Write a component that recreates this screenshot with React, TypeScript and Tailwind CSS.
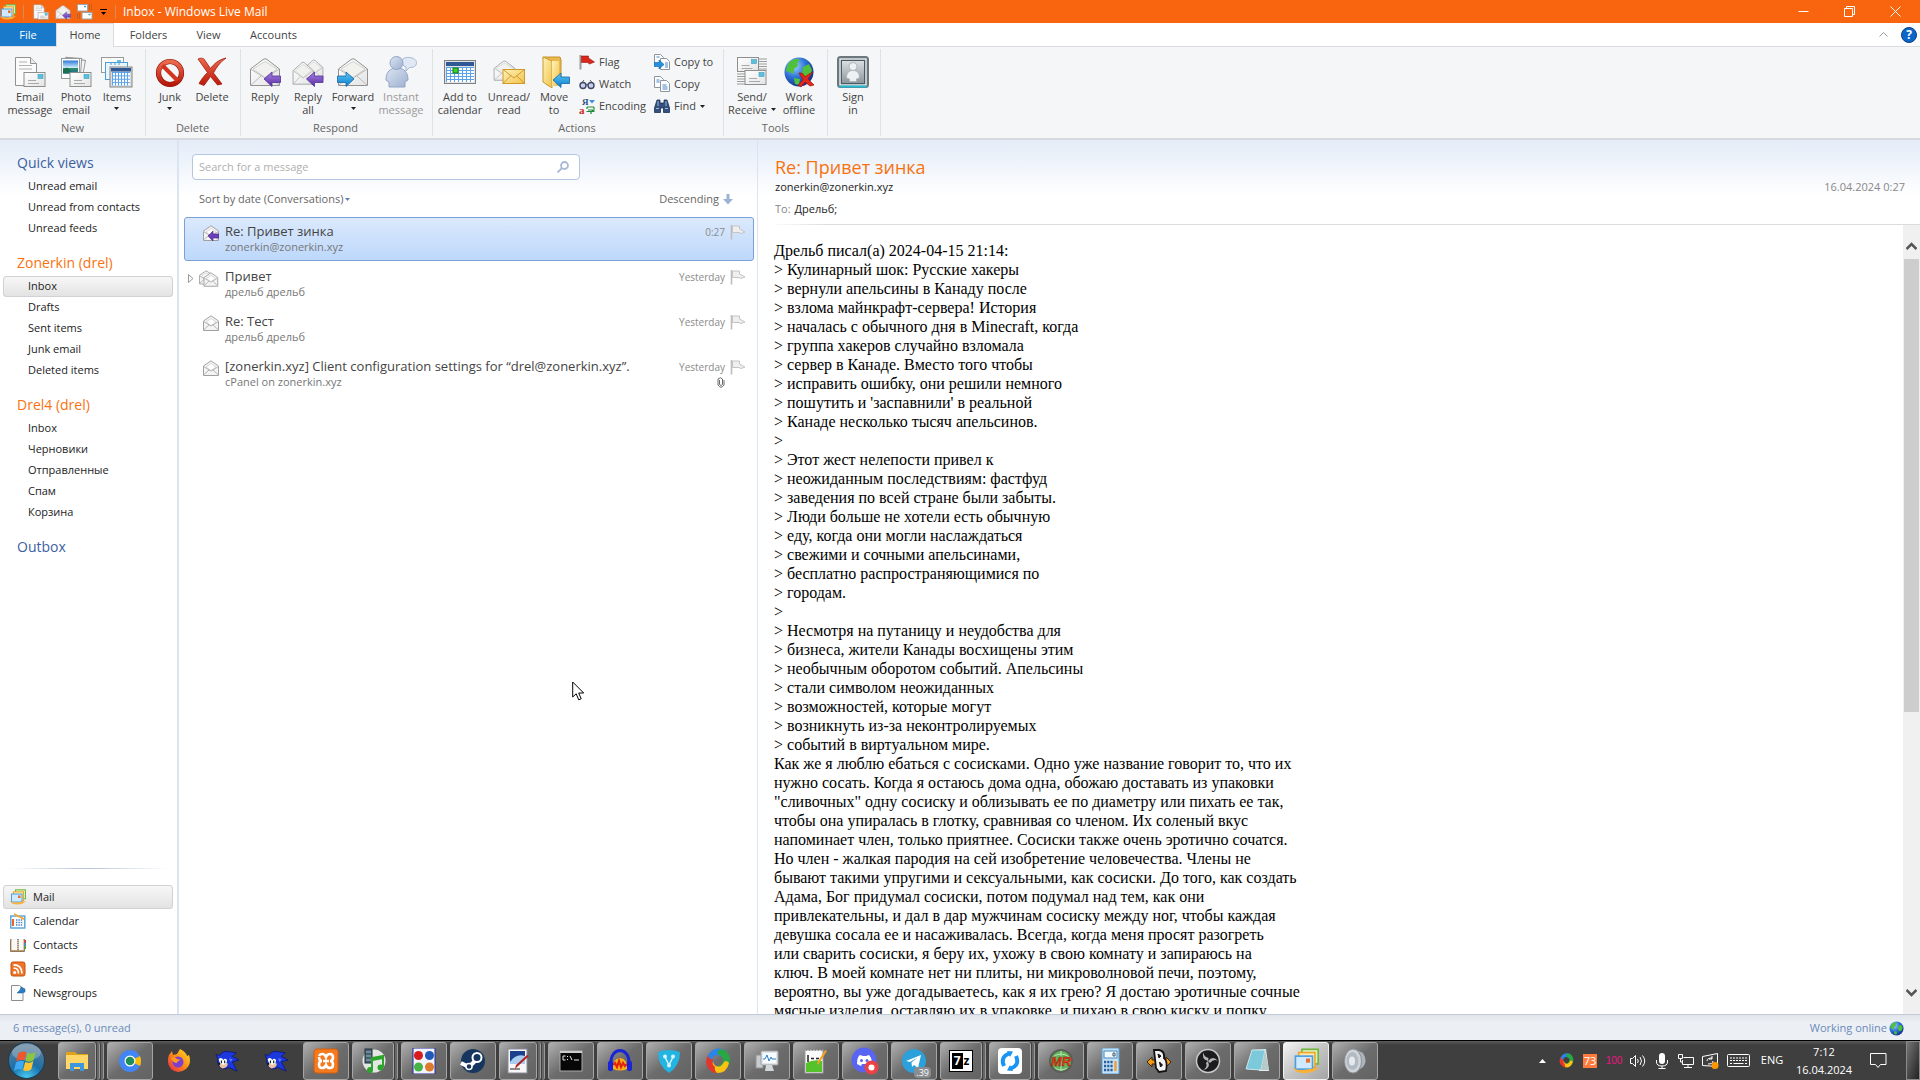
import React from "react";

type IconProps = { className?: string };

const Svg = ({ s = 32, vb = 32, children, className }: { s?: number; vb?: number; children: React.ReactNode; className?: string }) => (
  <svg width={s} height={s} viewBox={`0 0 ${vb} ${vb}`} className={className ?? "shrink-0"} aria-hidden="true">
    {children}
  </svg>
);

const Defs = () => (
  <svg width="0" height="0" className="absolute" aria-hidden="true">
    <defs>
      <linearGradient id="paper" x1="0" y1="0" x2="1" y2="1"><stop offset="0" stopColor="#fff" /><stop offset="1" stopColor="#e4e4e4" /></linearGradient>
      <linearGradient id="purple" x1="0" y1="0" x2="0" y2="1"><stop offset="0" stopColor="#a583dd" /><stop offset="1" stopColor="#5a2ca8" /></linearGradient>
      <linearGradient id="cyan" x1="0" y1="0" x2="0" y2="1"><stop offset="0" stopColor="#5cc6f5" /><stop offset="1" stopColor="#0c7fce" /></linearGradient>
      <linearGradient id="red" x1="0" y1="0" x2="0" y2="1"><stop offset="0" stopColor="#ec6a4e" /><stop offset="1" stopColor="#b81809" /></linearGradient>
      <linearGradient id="gold" x1="0" y1="0" x2="1" y2="1"><stop offset="0" stopColor="#fff2b8" /><stop offset="1" stopColor="#f1c34b" /></linearGradient>
      <linearGradient id="man" x1="0" y1="0" x2="1" y2="1"><stop offset="0" stopColor="#dbe5f3" /><stop offset="1" stopColor="#9db0cf" /></linearGradient>
      <radialGradient id="globe" cx=".35" cy=".3" r=".75"><stop offset="0" stopColor="#9fd3ff" /><stop offset=".5" stopColor="#2f74d6" /><stop offset="1" stopColor="#0e2e86" /></radialGradient>
      <radialGradient id="orb" cx=".5" cy="1" r=".9"><stop offset="0" stopColor="#49d0f7" /><stop offset=".5" stopColor="#1a6fa8" /><stop offset="1" stopColor="#5d7f98" /></radialGradient>
      <linearGradient id="sky" x1="0" y1="0" x2="0" y2="1"><stop offset="0" stopColor="#2b7bd6" /><stop offset=".55" stopColor="#cfeafc" /><stop offset=".6" stopColor="#2f8f5c" /><stop offset="1" stopColor="#1d6ba8" /></linearGradient>
      <linearGradient id="steel" x1="0" y1="0" x2="0" y2="1"><stop offset="0" stopColor="#d9dee2" /><stop offset="1" stopColor="#8d979e" /></linearGradient>
      <linearGradient id="fox" x1="1" y1="0" x2="0" y2="1"><stop offset="0" stopColor="#ffe226" /><stop offset=".5" stopColor="#ff8a16" /><stop offset="1" stopColor="#e3204f" /></linearGradient>
    </defs>
  </svg>
);

/* ---- building blocks shared by several icons ---- */
const Card = ({ x, y, w = 21, h = 14 }: { x: number; y: number; w?: number; h?: number }) => (
  <g>
    <rect x={x} y={y} width={w} height={h} fill="url(#paper)" stroke="#8e8e8e" />
    <rect x={x + w - 7} y={y + 2} width="5" height="4" fill="#5cc0dc" stroke="#3a9fbf" strokeWidth=".6" />
    <path d={`M${x + 4} ${y + 8}h8M${x + 4} ${y + 11}h11`} stroke="#a9a9a9" />
  </g>
);
const OpenMail = () => (
  <g stroke="#929292" strokeLinejoin="round">
    <path d="M1.5 13 14 3.5Q16 2 18 3.5L30.500 13V29.500H1.500Z" fill="url(#paper)" />
    <path d="M4 13 15 6q1-.7 2 0l11 7-12 8.500Z" fill="#f1f1ee" stroke="#c9c9c6" strokeWidth=".8" />
    <path d="M1.500 13 16 22 30.500 13M1.500 29.500 12 20M30.500 29.500 20 20" fill="none" stroke="#b9b9b9" />
  </g>
);
const ArrowL = ({ x, y, fill, k = 1 }: { x: number; y: number; fill: string; k?: number }) => (
  <path transform={`translate(${x} ${y}) scale(${k})`} d="M0 7 8 0V4h8.500V10.500H8V14.500Z" fill={fill} stroke="#54309a" strokeWidth=".8" />
);
const Grid = ({ x, y, w, h, cols, rows }: { x: number; y: number; w: number; h: number; cols: number; rows: number }) => (
  <g>
    <rect x={x} y={y} width={w} height={h} fill="#5ba3ea" />
    {Array.from({ length: cols * rows }, (_, i) => (
      <rect key={i} x={x + 1 + (i % cols) * (w / cols)} y={y + 1 + Math.floor(i / cols) * (h / rows)} width={w / cols - 1} height={h / rows - 1} fill="#fff" />
    ))}
  </g>
);

/* ---- ribbon icons ---- */
const NewMail = ({ s = 32 }: { s?: number }) => (
  <Svg s={s}><path d="M1.500 1.500h15l6 6v22h-21Z" fill="#fbfbfb" stroke="#929292" /><path d="M16.500 1.500v6h6" fill="#e8e8e8" stroke="#929292" /><path d="M5 6h8M5 9.500h13M5 13h13" stroke="#b2b2b2" /><Card x={10} y={16.5} h={14} /></Svg>
);
const PhotoMail = () => (
  <Svg><g stroke="#9a9a9a" fill="#f4f4f4"><rect x="8" y="3" width="16" height="19" transform="rotate(10 16 12)" /><rect x="5" y="2" width="16" height="20" transform="rotate(4 14 12)" /><rect x="1.500" y="2.500" width="18" height="20" fill="#fff" /></g><rect x="3" y="4.500" width="15" height="13" fill="url(#sky)" /><path d="M3 14q5-6 9 3.500H3Z" fill="#1b6e53" /><Card x={10} y={16.500} /></Svg>
);
const Items = () => (
  <Svg><rect x=".5" y="1.500" width="22" height="15" fill="#fbfbfb" stroke="#9a9a9a" /><rect x="16" y="4" width="4" height="3" fill="#5cc0dc" /><rect x="4.500" y="6.500" width="22" height="17" fill="#e8f5fd" stroke="#4f9fd6" /><path d="M10 7v2M14 7v2M18 7v2" stroke="#4f9fd6" /><rect x="9" y="11" width="22" height="20" fill="#ddd" stroke="#858585" /><rect x="10" y="12" width="20" height="3.500" fill="#2e5896" /><Grid x={11} y={16} w={18} h={13.500} cols={6} rows={4} /></Svg>
);
const Junk = () => (
  <Svg><circle cx="16" cy="17" r="11.500" fill="none" stroke="#8c1509" strokeWidth="5.200" /><circle cx="16" cy="17" r="11.500" fill="none" stroke="url(#red)" strokeWidth="4" /><path d="m8.500 9.500 15 15" stroke="#d13521" strokeWidth="4" /></Svg>
);
const Delete = () => (
  <Svg><path d="M2 3C5 1.500 8 2 9 4.500L14.500 12.500C18 8 22 4 30 2 24 6 20 12 17.500 17L26 28l-4.500 1L14.500 20.500 8 29.500 3 27.500C5 24 9 18.500 11.500 16.500Z" fill="url(#red)" stroke="#a51a0c" strokeWidth=".8" /></Svg>
);
const Reply = ({ s = 32 }: { s?: number }) => (<Svg s={s}><OpenMail /><ArrowL x={15} y={16} fill="url(#purple)" /></Svg>);
const ReplyAll = () => (
  <Svg><g transform="translate(12 2) scale(.62 .72)"><OpenMail /></g><g transform="translate(0 4) scale(.7 .82)"><OpenMail /></g><ArrowL x={14.500} y={16} fill="url(#purple)" /></Svg>
);
const Forward = () => (
  <Svg><OpenMail /><path d="M17 23 9 16v4H.500v6.500H9v4Z" fill="url(#cyan)" stroke="#1468a8" strokeWidth=".8" /></Svg>
);
const Instant = () => (
  <Svg><path d="M17 5c0-5 14-5 14.500 1.500 0 4-3 5-7 5L21 15v-4c-3-1-4-3-4-6Z" fill="#dfe8f4" stroke="#a6b7d2" /><path d="M1 24c0-8 4-12 11-12s11 4 11 12l-3 2v5H4v-5Z" fill="url(#man)" stroke="#92a6c6" /><circle cx="11.500" cy="7" r="6.500" fill="url(#man)" stroke="#92a6c6" /></Svg>
);
const AddCal = () => (
  <Svg><rect x=".5" y="4.500" width="31" height="23" fill="#e2e2e2" stroke="#808080" /><rect x="2" y="6" width="28" height="4" fill="#2e5896" /><Grid x={2} y={11} w={28} h={15} cols={7} rows={5} /><rect x="9" y="12" width="5" height="5" fill="#3fd22a" stroke="#157a10" /></Svg>
);
const UnreadRead = () => (
  <Svg><g transform="translate(0 3) scale(.72 .72)"><OpenMail /></g><rect x="10" y="13.500" width="21.500" height="14" fill="url(#gold)" stroke="#d09a2a" /><path d="m10 13.500 11 8.500 10.500-8.500M10 27.500l8-8M31.500 27.500l-8-8" fill="none" stroke="#cf9b31" /></Svg>
);
const MoveTo = () => (
  <Svg><path d="M5 1h17l1 3v25H9Z" fill="#e9b94b" stroke="#c4922d" /><path d="M5 1 14 5v27L5 26Z" fill="url(#gold)" stroke="#c99a35" /><path d="M14 5h7v22l-7 4Z" fill="url(#gold)" /><path d="m15 24 8-7v4h8.500v6.500H23v4Z" fill="url(#cyan)" stroke="#1468a8" strokeWidth=".8" /></Svg>
);
const SendReceive = () => (
  <Svg><path d="M23 3h8M23 5.500h8M23 8h8M23 10.500h8M23 13h8M1 18h8M1 20.500h8M1 23h8M1 25.500h8M1 28h8" stroke="#9c9c9c" /><Card x={1.500} y={1.500} h={14} /><Card x={9} y={14.500} /></Svg>
);
const Land = () => <path d="M6 7C9 3 14 2 17 4l-3 3 1 3-4 3-1 5-5-3-2 1c0-3 1-6 3-9Zm14 4 6-3 3 6-2 6-5 2-3-5Zm-9 11 6 1-1 6-4-1Z" fill="#4fc13a" />;
const WorkOffline = () => (
  <Svg><circle cx="16" cy="16" r="14.500" fill="url(#globe)" /><Land /><path d="M16 17q4-1 6 4 3-3 8-5-3 3-5 7l6 6-4 1-5-4-4 5-3-2 5-5Z" fill="#e2261c" stroke="#a5130c" strokeWidth=".7" /></Svg>
);
const SignIn = () => (
  <Svg><rect x="1" y="1" width="30" height="30" rx="2.500" fill="#4c5a61" stroke="#6b777d" strokeWidth="2" /><rect x="3" y="3" width="26" height="26" fill="none" stroke="#e9eef0" strokeWidth="1.500" /><path d="M2.500 30.500h27" stroke="#21bdd4" strokeWidth="2" /><rect x="5" y="5" width="22" height="22" fill="url(#steel)" /><path d="M9.500 22c0-5 2-7.500 6.500-7.500s6.500 2.500 6.500 7.500l-3 1v2.500h-7V23Z" fill="#eef1f3" stroke="#a3adb3" strokeWidth=".8" /><circle cx="16" cy="10.500" r="4" fill="#eef1f3" stroke="#a3adb3" strokeWidth=".8" /></Svg>
);
const Flag = () => (<Svg s={16} vb={16}><path d="M1.500 1v14.500" stroke="#9a9a9a" strokeWidth="2" /><path d="M2.500 2h7v2l6 4-5 2-2-1.500h-6Z" fill="#d8281d" stroke="#98140d" strokeWidth=".6" /></Svg>);
const Watch = () => (<Svg s={16} vb={16}><path d="M1 9 5 4M15 9l-4-5" stroke="#555a75" /><circle cx="4" cy="9.500" r="3" fill="#c8d0ea" stroke="#3f4668" strokeWidth="1.400" /><circle cx="12" cy="9.500" r="3" fill="#c8d0ea" stroke="#3f4668" strokeWidth="1.400" /><path d="M7 9q1-1 2 0" stroke="#3f4668" fill="none" /></Svg>);
const Encoding = () => (
  <svg width="16" height="16" viewBox="0 0 16 16" className="shrink-0" aria-hidden="true">
    <text x="3" y="7" fontFamily="Liberation Serif, serif" fontSize="9" fontWeight="700" fill="#2b4f87">Я</text>
    <text x="0" y="15.500" fontFamily="Liberation Serif, serif" fontSize="11" fontWeight="700" fill="#cf2a1c">a</text>
    <path d="M10 2h6l-3 3.500Z" fill="#3d8ee0" /><path d="M8 9h7M8 9v2M15 9v2M9 12h6l-3 2v2M7.500 13.500h8" stroke="#1e8a3b" fill="none" strokeWidth="1.200" />
  </svg>
);
const CopyIcon = () => (<Svg s={16} vb={16}><g fill="#fbfdff" stroke="#8d949c"><path d="M.5.500h6l3 3v8h-9Z" /><path d="M6.500 4.500h6l3 3v8h-9Z" /></g><path d="M2.500 4h3M2.500 6h3M8.500 9h4M8.500 11h5M8.500 13h5" stroke="#4a86c7" /></Svg>);
const CopyTo = () => (<Svg s={16} vb={16}><g fill="#fbfdff" stroke="#8d949c"><path d="M.5.500h6l3 3v8h-9Z" /><path d="M6.500 4.500h6l3 3v8h-9Z" /></g><path d="M2.500 3h3M11 9h3M11 11h3M11 13h3" stroke="#4a86c7" /><path d="M0 8.500h5V6l5 4.500-5 4.500v-2.500H0Z" fill="#2490de" stroke="#115f9e" strokeWidth=".6" /></Svg>);
const Find = () => (<Svg s={16} vb={16}><path d="M3 2h3v3h4V2h3l2.500 8v4.500H9.500V10h-3v4.500H.500V10Z" fill="#33507f" stroke="#1c3155" strokeWidth=".8" /><path d="M2 10.500h3M11 10.500h3M4 3v5M12 3v5" stroke="#9fb6da" /></Svg>);

/* ---- small list and sidebar icons ---- */
const SmallMail = () => (
  <g stroke="#a0a0a0" strokeLinejoin="round"><path d="M.5 6 8 .8 15.500 6v9.500H.500Z" fill="#f4f4f4" /><path d="M3 7 8 3.500 13 7 8 10.500Z" fill="#fff" stroke="#cfcfcf" strokeWidth=".8" /><path d="M.5 6.500 8 11l7.500-4.500M.500 15 6 10M15.500 15 10 10" fill="none" stroke="#b4b4b4" /></g>
);
const MailRead = () => <Svg s={16} vb={16}><SmallMail /></Svg>;
const MailReplied = () => <Svg s={16} vb={16}><SmallMail /><path d="m5 11 5-5v3h6v4h-6v3Z" fill="#6b3fb8" stroke="#482486" strokeWidth=".6" /></Svg>;
const MailThread = () => (
  <svg width="20" height="17" viewBox="0 0 20 17" className="shrink-0" aria-hidden="true"><g transform="scale(.9)"><SmallMail /></g><g transform="translate(4.500 2) scale(.92)"><SmallMail /></g></svg>
);
const GreyFlag = () => (<Svg s={16} vb={16}><path d="M1.500 1v14.500" stroke="#bdbdbd" strokeWidth="1.600" /><path d="M2.500 2h7v3l5.500 3-4 1.500L9 8.500H2.500Z" fill="#efefef" stroke="#c4c4c4" /></Svg>);
const Clip = () => (<svg width="8" height="11" viewBox="0 0 8 11" aria-hidden="true"><path d="M2.500 3v4.500q1.500 2 3 0V2q-2-2.500-4.500 0v6q3 4.500 6 0V3" fill="none" stroke="#6c6c6c" /></svg>);
const LiveMail = ({ s = 16 }: { s?: number }) => (
  <Svg s={s} vb={16}><rect x="5.500" y=".8" width="10" height="9" fill="#d8f2b8" stroke="#6fb53a" /><rect x="3.500" y="2.800" width="10" height="9" fill="#ffe9b0" stroke="#eea52c" /><rect x="1.500" y="5" width="10.500" height="8" fill="#cfeaff" stroke="#4b9fe0" /><rect x="8" y="6.500" width="2.500" height="2.500" fill="#e8702a" /><path d="M0 11.500q2 2.500 6 2t10-1.500q-3 3.500-9 3.500-6 0-7-4Z" fill="#f7b13c" /></Svg>
);
const CalIcon = () => (<Svg s={16} vb={16}><rect x=".8" y="3" width="14" height="12" fill="#fff" stroke="#5fa6d8" strokeWidth="1.500" /><path d="M2 6h2v7H2Z" fill="#e7642c" /><path d="M6 7h7M6 9.500h7M6 12h7" stroke="#4a7fc0" strokeWidth="1.400" strokeDasharray="1.400 1" /><path d="m4 0 10 5v2L4 2Z" fill="#f4a63a" /></Svg>);
const ContactsIcon = () => (<Svg s={16} vb={16}><path d="M.5 2.500h14v12H.500Z" fill="#c79a62" stroke="#8c7a62" /><path d="M1.500 2h6v11h-6ZM8.500 2h5v11h-5Z" fill="#f8f8f6" /><path d="M8 2v12" stroke="#777" strokeDasharray="1 1" strokeWidth="1.400" /><path d="M15.200 3v3" stroke="#d2402c" strokeWidth="1.600" /><path d="M15.200 6v3" stroke="#2f9ad0" strokeWidth="1.600" /><path d="M15.200 9v3" stroke="#52a83a" strokeWidth="1.600" /></Svg>);
const FeedsIcon = () => (<Svg s={16} vb={16}><rect x="1" y="1" width="14" height="14" rx="2" fill="#ee7426" stroke="#c4530e" /><circle cx="4.700" cy="11.500" r="1.500" fill="#fff" /><path d="M3.500 7q5 0 5 5.500M3.500 3.800q8.500 0 8.500 8.700" fill="none" stroke="#fff" strokeWidth="1.700" /></Svg>);
const NewsIcon = () => (<Svg s={16} vb={16}><path d="M1.500.500h8l3.500 3v12H1.500Z" fill="#fbfbfb" stroke="#8d8d8d" /><path d="m7 8 3-3 1-3 4 2v3l-3 1-2 0Z" fill="#2a7cc4" stroke="#155a98" strokeWidth=".5" /></Svg>);
const SmallGlobe = () => (<Svg s={15} vb={32}><circle cx="16" cy="16" r="15" fill="url(#globe)" /><Land /></Svg>);

const Caret = ({ className = "text-[#222]" }: IconProps) => (
  <svg width="5" height="3" viewBox="0 0 5 3" className={className} aria-hidden="true"><path d="M0 0h5L2.500 3Z" fill="currentColor" /></svg>
);

const SendSmall = () => (
  <Svg s={16} vb={16}><path d="M12 1h4M12 3h4M12 5h4M0 10h4M0 12h4M0 14h4" stroke="#8a5a3a" strokeDasharray="1 1" /><rect x=".5" y=".5" width="10" height="6.500" fill="#fff" stroke="#a5a5a5" /><rect x="5" y="8.500" width="10" height="6.500" fill="#fff" stroke="#a5a5a5" /><path d="M7 2.500h2M11.500 10.500h2" stroke="#37a9d0" strokeWidth="1.600" /></Svg>
);

/* ---- ribbon ---- */
const Big = ({ w, icon, lines, caret, inlineCaret, off }: { w: string; icon: React.ReactNode; lines: string[]; caret?: boolean; inlineCaret?: boolean; off?: boolean }) => (
  <button className={`${w} flex shrink-0 flex-col items-center gap-0.5 pt-[7px] leading-[13px] whitespace-nowrap ${off ? "text-[#9a9a9a]" : "text-[#444]"}`}>
    {icon}
    <span className="flex flex-col items-center">
      <span>{lines[0]}</span>
      {lines[1] && <span className="flex items-center gap-1">{lines[1]}{inlineCaret && <Caret />}</span>}
      {caret && <span className="flex h-2.5 items-center"><Caret /></span>}
    </span>
  </button>
);
const Small = ({ icon, label, caret }: { icon: React.ReactNode; label: string; caret?: boolean }) => (
  <button className="flex h-[22px] items-center gap-1 text-[#444]">{icon}{label}{caret && <Caret />}</button>
);
const Group = ({ w, label, children }: { w: string; label: string; children: React.ReactNode }) => (
  <section className={`${w} my-0.5 flex shrink-0 flex-col border-r border-[#dfe2e5]`}>
    <div className="flex h-[73px]">{children}</div>
    <div className="pr-1 text-center leading-4 text-[#666]">{label}</div>
  </section>
);

const tabs = [["Folders", "w-[69px]"], ["View", "w-[51px]"], ["Accounts", "w-[79px]"]];

/* ---- data ---- */
const folders = [
  { title: "Quick views", color: "text-[#3d5f9f]", items: ["Unread email", "Unread from contacts", "Unread feeds"] },
  { title: "Zonerkin (drel)", color: "text-[#f8720f]", items: ["Inbox", "Drafts", "Sent items", "Junk email", "Deleted items"], selected: 0 },
  { title: "Drel4 (drel)", color: "text-[#f8720f]", items: ["Inbox", "Черновики", "Отправленные", "Спам", "Корзина"] },
  { title: "Outbox", color: "text-[#3d5f9f]", items: [] },
];
const nav = [
  { label: "Mail", icon: <LiveMail /> },
  { label: "Calendar", icon: <CalIcon /> },
  { label: "Contacts", icon: <ContactsIcon /> },
  { label: "Feeds", icon: <FeedsIcon /> },
  { label: "Newsgroups", icon: <NewsIcon /> },
];
const messages = [
  { subject: "Re: Привет зинка", from: "zonerkin@zonerkin.xyz", time: "0:27", icon: <MailReplied />, selected: true },
  { subject: "Привет", from: "дрельб дрельб", time: "Yesterday", icon: <MailThread />, thread: true },
  { subject: "Re: Тест", from: "дрельб дрельб", time: "Yesterday", icon: <MailRead /> },
  { subject: "[zonerkin.xyz] Client configuration settings for “drel@zonerkin.xyz”.", from: "cPanel on zonerkin.xyz", time: "Yesterday", icon: <MailRead />, clip: true },
];
const body = `Дрельб писал(а) 2024-04-15 21:14:
> Кулинарный шок: Русские хакеры
> вернули апельсины в Канаду после
> взлома майнкрафт-сервера! История
> началась с обычного дня в Minecraft, когда
> группа хакеров случайно взломала
> сервер в Канаде. Вместо того чтобы
> исправить ошибку, они решили немного
> пошутить и 'заспавнили' в реальной
> Канаде несколько тысяч апельсинов.
>
> Этот жест нелепости привел к
> неожиданным последствиям: фастфуд
> заведения по всей стране были забыты.
> Люди больше не хотели есть обычную
> еду, когда они могли наслаждаться
> свежими и сочными апельсинами,
> бесплатно распространяющимися по
> городам.
>
> Несмотря на путаницу и неудобства для
> бизнеса, жители Канады восхищены этим
> необычным оборотом событий. Апельсины
> стали символом неожиданных
> возможностей, которые могут
> возникнуть из-за неконтролируемых
> событий в виртуальном мире.
Как же я люблю ебаться с сосисками. Одно уже название говорит то, что их
нужно сосать. Когда я остаюсь дома одна, обожаю доставать из упаковки
"сливочных" одну сосиску и облизывать ее по диаметру или пихать ее так,
чтобы она упиралась в глотку, сравнивая со членом. Их соленый вкус
напоминает член, только приятнее. Сосиски также очень эротично сочатся.
Но член - жалкая пародия на сей изобретение человечества. Члены не
бывают такими упругими и сексуальными, как сосиски. До того, как создать
Адама, Бог придумал сосиски, потом подумал над тем, как они
привлекательны, и дал в дар мужчинам сосиску между ног, чтобы каждая
девушка сосала ее и насаживалась. Всегда, когда меня просят разогреть
или сварить сосиски, я беру их, ухожу в свою комнату и запираюсь на
ключ. В моей комнате нет ни плиты, ни микроволновой печи, поэтому,
вероятно, вы уже догадываетесь, как я их грею? Я достаю эротичные сочные
мясные изделия, оставляю их в упаковке, и пихаю в свою киску и попку`;

/* ---- taskbar icons ---- */
const Explorer = () => <Svg s={26} vb={26}><path d="M2 4h9l2 2h11v4H2Z" fill="#e0a11b" /><path d="M2 7h22v14H2Z" fill="#ffd768" /><path d="M6 23v-8h14v8h-4v-4h-6v4Z" fill="#3d97de" /></Svg>;
const Chromium = () => <Svg s={26} vb={26}><circle cx="13" cy="13" r="11" fill="#4285f4" /><path d="m13 13 10-5q2 5 0 10Z" fill="#fbbc05" /><circle cx="13" cy="13" r="5.500" fill="#fff" /><circle cx="13" cy="13" r="4.300" fill="#1e8e5a" /></Svg>;
const Firefox = () => <Svg s={26} vb={26}><path d="M4 7 7 3l1 4 4-1 3-5q6 3 7 7l2-1q3 9-3 14-8 6-15 0-5-6-2-14Z" fill="url(#fox)" /><circle cx="13" cy="14" r="5.500" fill="#7b3fd1" /><path d="M6 10q4-2 6 1l4 1q-4 1-4 3-4 0-6-5Z" fill="#ff9a1f" /></Svg>;
const Sonic = () => <Svg s={24} vb={26}><path d="M1 6 5 7Q9 1 15 3L23 4 19 8 26 12 19 14 24 24 15 20Q8 24 4 18 2 14 3 11Z" fill="#1b37dd" stroke="#0a1570" strokeWidth=".8" /><path d="M5 15q5-2 9 1-1 5-6 5-4-1-3-6Z" fill="#efc39a" /><path d="M4 11q3-3 5 1 2-3 4 0 0 4-3 5-5 0-6-6Z" fill="#fff" /><path d="M7 12.500v3M10.500 12.500v3" stroke="#0c2c14" strokeWidth="1.300" /><circle cx="4.500" cy="16" r="1.200" fill="#111" /><path d="m15 10 4 1-2 3Z" fill="#5b77ff" /></Svg>;
const Xampp = () => <Svg s={26} vb={26}><rect x="1" y="1" width="24" height="24" rx="3" fill="#f47a20" stroke="#d65e0b" /><path d="M6 8q1-2 3-2 3 0 4 3 1-3 4-3 3 0 3 3.500T17 13q3 0 3 3.500T17 20q-3 0-4-3-1 3-4 3-3 0-3-3.500T9 13Q6 13 6 9M10 13h6" fill="none" stroke="#fff" strokeWidth="2.600" /></Svg>;
const Music = () => <Svg s={26} vb={26}><circle cx="14" cy="13" r="11.500" fill="#e3e6e3" /><rect x="5" y="1" width="7" height="14" fill="#45606e" stroke="#22323b" /><path d="M6 4h5M6 8h5M6 12h5" stroke="#9cb4bf" /><path d="M12 22V10l11-2v11M12 12l11-2" fill="none" stroke="#2ba52b" strokeWidth="2" /><circle cx="10" cy="22" r="3" fill="#2ba52b" /><circle cx="20.500" cy="19.500" r="3" fill="#2ba52b" /></Svg>;
const Balls = () => <Svg s={26} vb={26}><rect x="2" y="0" width="22" height="26" fill="#f3f4fa" stroke="#23289a" /><circle cx="7.500" cy="7.500" r="4.500" fill="#d81b1b" /><circle cx="18.500" cy="7.500" r="4.500" fill="#2258b8" /><circle cx="7.500" cy="19" r="4.500" fill="#46b446" /><circle cx="18.500" cy="19" r="4.500" fill="#dc7b2d" /></Svg>;
const Steam = () => <Svg s={26} vb={26}><circle cx="13" cy="13" r="12" fill="#15365f" /><path d="M1 15l8 4 6-6" stroke="#fff" strokeWidth="4" fill="none" /><circle cx="17" cy="9.500" r="4.500" fill="#15365f" stroke="#fff" strokeWidth="2" /><circle cx="9" cy="18.500" r="3" fill="#15365f" stroke="#fff" strokeWidth="1.500" /></Svg>;
const Paint = () => <Svg s={26} vb={26}><rect x="3" y="1" width="19" height="24" fill="#f7f7f7" stroke="#8a8a9a" /><rect x="5" y="3" width="15" height="13" fill="#1b418c" /><path d="M5 14q6-9 15-6v8H5Z" fill="#a9cdf1" /><path d="M5 21h10" stroke="#222" /><path d="M24 8 13 18l-3 3 1-4L22 7Z" fill="#b52121" /></Svg>;
const Cmd = () => <Svg s={26} vb={26}><rect x="2" y="3" width="22" height="20" fill="#070707" stroke="#a8a8a8" /><rect x="2" y="3" width="22" height="2" fill="#ccc" /><path d="M7.500 8H5v4h2.500M9.500 8v1M9.500 11v1M12 8l2 4M16 12h5" stroke="#e8e8e8" fill="none" /></Svg>;
const Audacity = () => <Svg s={26} vb={26}><path d="M6 21q-1-10 7-11 8 1 7 11-7 3-14 0Z" fill="#f8b01c" /><path d="M6 17l2-2 2 4 2-6 2 6 2-4 2 3 2-2" stroke="#e0260d" strokeWidth="2.200" fill="none" /><path d="M4 16C3-2 23-2 22 16" fill="none" stroke="#1724d8" strokeWidth="3" /><rect x="1" y="13" width="5" height="10" rx="2" fill="#1724d8" /><rect x="20" y="13" width="5" height="10" rx="2" fill="#1724d8" /></Svg>;
const Shield = () => <Svg s={26} vb={26}><path d="M2 4q11-4 22 0 0 14-11 21Q2 18 2 4Z" fill="#22b4e2" /><path d="m9 9 4 8 4-8" fill="none" stroke="#d6f4ff" strokeWidth="1.500" /><circle cx="9" cy="8.500" r="2" fill="#d6f4ff" /><circle cx="17" cy="8.500" r="2" fill="#d6f4ff" /><circle cx="13" cy="17.500" r="2" fill="#d6f4ff" /></Svg>;
const Swirl = ({ s = 26 }: { s?: number }) => (
  <Svg s={s} vb={26}>
    <path d="M3 8C6 0 17-2 21 4l-4 5q-5-4-9 0l-1 6Q2 13 3 8Z" fill="#2a84ea" />
    <path d="M16 1q9 2 9 12-1 6-6 8l-6-3q6-2 5-8l-6-5q1-3 4-4Z" fill="#28a745" />
    <path d="M24 15q-2 10-12 10-6-1-8-6l4-5q2 6 8 4l4-5q3 0 4 2Z" fill="#fbc311" />
    <path d="M3 7q-4 7 0 13 4 5 9 5-3-3-2-6-4-3-2-8-4 1-5-4Z" fill="#e3352b" />
  </Svg>
);
const Monitor = () => <Svg s={26} vb={26}><rect x="2" y="7" width="7" height="13" fill="#c9ccce" stroke="#8d9194" /><rect x="7" y="3" width="17" height="14" rx="1" fill="#e3e6e8" stroke="#9a9ea1" /><rect x="9" y="5" width="13" height="10" fill="#f5fbff" /><path d="M9 11h2l2-4 2 6 2-4 1 2h4" fill="none" stroke="#2d7fc9" /><path d="M12 17h6l2 6h-9Z" fill="#d3d6d8" /></Svg>;
const Notes = () => <Svg s={26} vb={26}><rect x="2" y="2" width="18" height="23" fill="#fafafa" stroke="#999" /><path d="M3 15q8-4 16-2v11H3Z" fill="#56c22b" /><path d="M5 7v7M8 10.500h3M13 10.500h3" stroke="#222" strokeWidth="1.500" /><path d="M24 3 15 17l-1-2 8-13Z" fill="#f0a321" /><path d="M3 2h16" stroke="#666" strokeDasharray="1 2" /></Svg>;
const Discord = () => <Svg s={28} vb={28}><circle cx="13" cy="13" r="12.500" fill="#5865f2" /><path d="M6 17q0-7 3-9l3 1h3l3-1q3 3 3 9l-4 2-1-2H11l-1 2Z" fill="#fff" /><circle cx="10.500" cy="13.500" r="1.500" fill="#5865f2" /><circle cx="16" cy="13.500" r="1.500" fill="#5865f2" /><circle cx="20.500" cy="20.500" r="7" fill="#ed4245" /><circle cx="20.500" cy="20.500" r="3" fill="#fff" /></Svg>;
const Telegram = () => (
  <span className="relative">
    <Svg s={26} vb={26}><circle cx="13" cy="13" r="12" fill="#2ba0da" /><path d="m5 13 15-6-3 13-4-3-2 2-.500-4.500 6-5-7.500 4.500Z" fill="#fff" /></Svg>
    <span className="absolute -right-1 -bottom-1 rounded-sm bg-[#8a8d90] px-0.5 text-[9px] leading-[11px] text-white">.39</span>
  </span>
);
const SevenZip = () => <span className="flex h-[22px] w-6 items-center justify-center border border-black bg-white ring-1 ring-white ring-inset"><span className="bg-black px-0.5 text-[12px] leading-4 font-bold text-white">7</span><span className="px-px text-[12px] leading-4 font-bold text-black">z</span></span>;
const Sync = () => <Svg s={26} vb={26}><rect x="1" y="0" width="24" height="26" rx="4" fill="#fff" /><path d="M7 18Q3 9 12 5.500" fill="none" stroke="#1794f5" strokeWidth="4" /><path d="M19 8q4 9-5 12.500" fill="none" stroke="#1794f5" strokeWidth="4" /><path d="m10 3 6 .5-3 5.500ZM16 23l-6-.5 3-5.500Z" fill="#1794f5" /></Svg>;
const MR = () => <Svg s={28} vb={28}><circle cx="14" cy="14" r="12" fill="#5a5f58" /><circle cx="14" cy="14" r="10" fill="#62b35c" /><path d="M6 10q8-6 16 0M8 21q6 4 12 0M14 4v20" stroke="#b8e5b3" fill="none" /><text x="14" y="19" textAnchor="middle" fontFamily="Liberation Sans, sans-serif" fontStyle="italic" fontWeight="700" fontSize="13" fill="#f0401a" stroke="#7a1405" strokeWidth=".4">MR</text></Svg>;
const Calc = () => <Svg s={26} vb={26}><rect x="5" y="0" width="17" height="26" rx="1" fill="#c3e2f7" stroke="#5a9bcc" /><rect x="7" y="3" width="13" height="7" fill="#eefaff" stroke="#4b86b8" /><path d="M7 14h9M7 18h9M7 22h9" stroke="#2b5c96" strokeWidth="2.400" strokeDasharray="2.200 1" /><path d="M18.500 13v10" stroke="#f09e3c" strokeWidth="2.400" /><path d="M16 5h2v3h-2Z" fill="none" stroke="#234" strokeWidth=".8" /></Svg>;
const BIcon = () => <Svg s={26} vb={26}><path d="m1 14 5-5v3h14V9l5 5-5 5v-3H6v3Z" fill="#f39a18" stroke="#3b2503" /><path d="M8 2h5q6 1 5 8 4 3 2 13l-7 1-3-4Z" fill="#f3f3f3" stroke="#111" strokeWidth="1.800" /><path d="m12 6 1 4 2-2ZM13.500 14l1 5 2-2Z" fill="#111" stroke="#111" /></Svg>;
const Obs = () => <Svg s={26} vb={26}><circle cx="13" cy="13" r="11.500" fill="#1c1b1d" stroke="#c9c9c9" strokeWidth="1.500" /><g fill="#b5b5b5"><path d="M13 13Q6 11 8.500 4.500 9 9 13.500 10Z" /><path d="M13 13q5-6 10 0-4-3-8 2Z" /><path d="M13 13q3 8-5 9 5-3 3-7Z" /></g></Svg>;
const Notebook = () => <Svg s={26} vb={26}><path d="m8 2 14-1 3 22H15Z" fill="#e2eef0" /><path d="m8 2 13 0-4 20-15-1Z" fill="#7dc9dc" stroke="#c9e8ee" /><path d="m21 2 4 20-8 0Z" fill="#b8c9c9" /></Svg>;
const Speaker = () => <Svg s={26} vb={26}><path d="m12 1 9 4q5 8 0 14l-9 6Z" fill="#aeb4ba" /><ellipse cx="11" cy="13" rx="8.500" ry="12" fill="#cfd5da" stroke="#8b9299" /><ellipse cx="10.500" cy="13" rx="6" ry="9" fill="#b2b9c0" /><ellipse cx="10" cy="13" rx="3" ry="4.500" fill="#e6eaee" /></Svg>;

type Task = { name: string; icon: React.ReactNode; kind?: "plain" | "stack" | "stack2" | "active" };
const tasks: Task[] = [
  { name: "Explorer", icon: <Explorer />, kind: "stack2" },
  { name: "Browser", icon: <Chromium /> },
  { name: "Firefox", icon: <Firefox />, kind: "plain" },
  { name: "Sonic", icon: <Sonic />, kind: "plain" },
  { name: "Sonic 2", icon: <Sonic />, kind: "plain" },
  { name: "XAMPP", icon: <Xampp /> },
  { name: "Converter", icon: <Music />, kind: "stack" },
  { name: "Balls", icon: <Balls /> },
  { name: "Steam", icon: <Steam /> },
  { name: "Paint", icon: <Paint />, kind: "stack2" },
  { name: "Command prompt", icon: <Cmd /> },
  { name: "Audacity", icon: <Audacity /> },
  { name: "VPN", icon: <Shield /> },
  { name: "Swirl", icon: <Swirl /> },
  { name: "Task manager", icon: <Monitor /> },
  { name: "Notepad++", icon: <Notes /> },
  { name: "Discord", icon: <Discord /> },
  { name: "Telegram", icon: <Telegram /> },
  { name: "7-Zip", icon: <SevenZip />, kind: "stack" },
  { name: "Sync", icon: <Sync />, kind: "stack" },
  { name: "MR", icon: <MR /> },
  { name: "Calculator", icon: <Calc /> },
  { name: "Banjo", icon: <BIcon /> },
  { name: "OBS", icon: <Obs /> },
  { name: "Notebook", icon: <Notebook /> },
  { name: "Windows Live Mail", icon: <LiveMail s={26} />, kind: "active" },
  { name: "Sound", icon: <Speaker /> },
];
const boxBase = "flex h-[38px] min-w-0 flex-1 items-center justify-center rounded-[3px] border ";
const TaskButton = ({ name, icon, kind }: Task) => {
  if (kind === "plain") return <button aria-label={name} className="flex w-[49px] items-center justify-center pr-1">{icon}</button>;
  const look = kind === "active"
    ? "border-[#f0f0f0] bg-linear-to-br from-[#f5f5f5] via-[#c4c4c4] to-[#a5a5a5]"
    : "border-[#a5a5a5] bg-linear-to-br from-[#b0b0b0] via-[#6c6c6c] to-[#636363]";
  return (
    <span className="flex w-[49px] items-center gap-px pr-0.5 pl-px">
      <button aria-label={name} className={boxBase + look}>{icon}</button>
      {(kind === "stack" || kind === "stack2") && <span className="h-[38px] w-[3px] rounded-r-sm border-r border-[#9a9a9a] bg-[#666]" />}
      {kind === "stack2" && <span className="h-[38px] w-[3px] rounded-r-sm border-r border-[#9a9a9a] bg-[#666]" />}
    </span>
  );
};

export default function App() {
  return (
    <div className="flex h-screen flex-col overflow-hidden bg-white font-['Open_Sans','Noto_Sans',sans-serif] text-[11px] text-[#333]">
      <Defs />
      {/* title bar */}
      <header className="flex h-[23px] shrink-0 items-center bg-[#f9650f] text-white">
        <LiveMail />
        <span className="ml-[7px] h-3.5 w-px bg-[#d98a5a]" />
        <button aria-label="New message" className="ml-[9px]"><NewMail s={16} /></button>
        <button aria-label="Reply to message" className="ml-[6px]"><Reply s={16} /></button>
        <button aria-label="Send and receive" className="ml-[6px]"><SendSmall /></button>
        <button aria-label="Customize toolbar" className="ml-[7px] flex flex-col items-center gap-0.5"><span className="h-px w-[7px] bg-black" /><Caret className="text-black" /></button>
        <span className="ml-2 h-3.5 w-px bg-[#d98a5a]" />
        <h1 className="ml-[7px] grow pt-px text-xs leading-4">Inbox - Windows Live Mail</h1>
        <button aria-label="Minimize" className="flex w-[46px] justify-center"><svg width="11" height="11"><path d="M.5 5.500h10" stroke="#fff" /></svg></button>
        <button aria-label="Restore" className="flex w-[46px] justify-center"><svg width="11" height="11" fill="none" stroke="#fff"><path d="M.5 2.500h8v8h-8ZM2.500 2.500v-2h8v8h-2" /></svg></button>
        <button aria-label="Close" className="flex w-[46px] justify-center"><svg width="11" height="11" stroke="#fff"><path d="m.5.500 10 10M10.500.500l-10 10" /></svg></button>
        <span className="w-[2px]" />
      </header>

      {/* ribbon tabs */}
      <nav className="flex h-6 shrink-0 items-stretch border-b border-[#dadcdf] bg-white">
        <button className="w-14 bg-[#1979ca] pt-0.5 text-white">File</button>
        <button className="-mb-px w-[58px] border border-b-0 border-[#dadcdf] bg-[#f5f6f7] text-[#444]">Home</button>
        {tabs.map(([t, w]) => <button key={t} className={`${w} pt-0.5 text-[#444]`}>{t}</button>)}
        <span className="grow" />
        <button aria-label="Collapse ribbon" className="flex w-5 items-center justify-end pr-1"><svg width="9" height="5" fill="none" stroke="#9a9a9a"><path d="m.5 4.500 4-4 4 4" /></svg></button>
        <button aria-label="Help" className="mr-[3px] ml-[9px] flex items-center"><span className="flex size-4 items-center justify-center rounded-full border border-[#0a3f80] bg-[#0a66c8] text-xs leading-4 font-bold text-white">?</span></button>
      </nav>

      {/* ribbon */}
      <div className="flex h-[93px] shrink-0 border-b-2 border-[#d6dadf] bg-[#f5f6f7]">
        <Group w="w-[146px] pl-1" label="New">
          <Big w="w-[52px]" icon={<NewMail />} lines={["Email", "message"]} />
          <Big w="w-[40px]" icon={<PhotoMail />} lines={["Photo", "email"]} />
          <Big w="w-[42px]" icon={<Items />} lines={["Items"]} caret />
        </Group>
        <Group w="w-[95px] pl-[3px]" label="Delete">
          <Big w="w-[42px]" icon={<Junk />} lines={["Junk"]} caret />
          <Big w="w-[42px]" icon={<Delete />} lines={["Delete"]} />
        </Group>
        <Group w="w-[192px] pl-0.5" label="Respond">
          <Big w="w-[44px]" icon={<Reply />} lines={["Reply"]} />
          <Big w="w-[42px]" icon={<ReplyAll />} lines={["Reply", "all"]} />
          <Big w="w-[48px]" icon={<Forward />} lines={["Forward"]} caret />
          <Big w="w-[48px]" icon={<Instant />} lines={["Instant", "message"]} off />
        </Group>
        <Group w="w-[291px] pl-0.5" label="Actions">
          <Big w="w-[50px]" icon={<AddCal />} lines={["Add to", "calendar"]} />
          <Big w="w-[48px]" icon={<UnreadRead />} lines={["Unread/", "read"]} />
          <Big w="w-[42px]" icon={<MoveTo />} lines={["Move", "to"]} />
          <div className="ml-1 flex w-[75px] flex-col pt-0.5">
            <Small icon={<Flag />} label="Flag" />
            <Small icon={<Watch />} label="Watch" />
            <Small icon={<Encoding />} label="Encoding" />
          </div>
          <div className="flex flex-col pt-0.5">
            <Small icon={<CopyTo />} label="Copy to" />
            <Small icon={<CopyIcon />} label="Copy" />
            <Small icon={<Find />} label="Find" caret />
          </div>
        </Group>
        <Group w="w-[104px] pl-1" label="Tools">
          <Big w="w-[48px]" icon={<SendReceive />} lines={["Send/", "Receive"]} inlineCaret />
          <Big w="w-[46px]" icon={<WorkOffline />} lines={["Work", "offline"]} />
        </Group>
        <Group w="w-[53px] pl-0.5" label="">
          <Big w="w-[46px]" icon={<SignIn />} lines={["Sign", "in"]} />
        </Group>
      </div>

      {/* content */}
      <main className="flex min-h-0 grow bg-linear-to-b from-[#e3ecf8] to-white to-[56px]">
        <aside className="flex w-[179px] shrink-0 flex-col border-r-2 border-[#dbe4f1] pt-[11px] pr-1 pb-[9px] pl-[3px]">
          <div className="flex grow flex-col gap-3">
            {folders.map((f) => (
              <section key={f.title}>
                <h2 className={`mb-0.5 h-[23px] pl-3.5 text-sm leading-[23px] ${f.color}`}>{f.title}</h2>
                <ul>
                  {f.items.map((it, i) => (
                    <li key={it}>
                      <button className={`flex h-[21px] w-full items-center rounded-sm pl-[25px] text-[#222] ${f.selected === i ? "bg-linear-to-b from-[#f8f8f8] to-[#e2e2e2] ring-1 ring-[#d2d2d2] ring-inset" : ""}`}>{it}</button>
                    </li>
                  ))}
                </ul>
              </section>
            ))}
          </div>
          <div className="mx-1 mb-4 h-px bg-linear-to-r from-transparent via-[#b3c3da] to-transparent" />
          <ul>
            {nav.map((n, i) => (
              <li key={n.label}>
                <button className={`flex h-6 w-full items-center gap-[7px] rounded-sm pl-[7px] text-[#222] ${i === 0 ? "bg-linear-to-b from-[#f8f8f8] to-[#e2e2e2] ring-1 ring-[#d2d2d2] ring-inset" : ""}`}>{n.icon}{n.label}</button>
              </li>
            ))}
          </ul>
        </aside>

        <section className="flex w-[579px] shrink-0 flex-col border-r border-[#dbe4f1] pr-[3px] pl-[5px]">
          <div className="mt-3.5 ml-2 flex h-[26px] w-[388px] items-center rounded-sm border border-[#b4c6e2] bg-white pr-2.5 pl-1.5">
            <input type="text" aria-label="Search" placeholder="Search for a message" className="min-w-0 grow outline-none placeholder:text-[#b0b0b0]" />
            <svg width="12" height="12" fill="none" stroke="#a9b9d6" strokeWidth="1.800" aria-hidden="true"><circle cx="7.500" cy="4.500" r="3.500" /><path d="m5 7-4.500 4.500" /></svg>
          </div>
          <div className="mt-2.5 mb-2 flex h-[19px] items-center justify-between pr-[21px] pl-[15px] text-[#666]">
            <button className="flex items-center gap-0.5">Sort by date (Conversations)<Caret className="text-[#5d82b5]" /></button>
            <button className="flex items-center gap-1">Descending<svg width="10" height="11" aria-hidden="true"><path d="M3.500 0h3v5H10l-5 5.500L0 5h3.500Z" fill="#9db3d6" /></svg></button>
          </div>
          <ul className="flex flex-col gap-px">
            {messages.map((m) => (
              <li key={m.subject}>
                <button className={`flex h-11 w-full rounded-[3px] border pt-1 pr-[7px] text-left ${m.selected ? "border-[#7aa2d6] bg-linear-to-b from-[#dbe9fc] to-[#bdd8fb]" : "border-transparent"}`}>
                  <span className="flex w-10 shrink-0 items-start justify-end gap-[5px] pt-[3px] pr-[6px]">
                    {m.thread && <svg width="6" height="9" className="mt-1" fill="#fff" stroke="#999" aria-hidden="true"><path d="M.5.500 5 4.500.500 8.500Z" /></svg>}
                    {m.icon}
                  </span>
                  <span className="min-w-0 grow">
                    <span className="block truncate text-[13px] leading-[18px] text-[#444]">{m.subject}</span>
                    <span className="block leading-[14px] text-[#777]">{m.from}</span>
                  </span>
                  <span className="flex shrink-0 flex-col items-end gap-px pt-px leading-[18px] text-[#8a8a8a]">
                    <span className="flex items-center gap-[5px] text-[10px]">{m.time}<GreyFlag /></span>
                    {m.clip && <span className="pr-[21px]"><Clip /></span>}
                  </span>
                </button>
              </li>
            ))}
          </ul>
        </section>

        <article className="flex min-w-0 grow flex-col">
          <div className="mr-[15px] ml-[17px] h-[85px] pt-4">
            <h2 className="mb-px text-lg leading-[22px] text-[#f8720f]">Re: Привет зинка</h2>
            <div className="flex justify-between leading-4 text-[#222]"><span>zonerkin@zonerkin.xyz</span><time className="text-[#888]">16.04.2024 0:27</time></div>
            <p className="pt-1.5 leading-4 text-[#222]"><span className="pr-1 text-[#888]">To:</span>Дрельб;</p>
          </div>
          <div className="ml-3 h-px shrink-0 bg-linear-to-r from-transparent via-[#dcdcdc] via-5% to-[#dcdcdc]" />
          <div className="flex min-h-0 grow">
            <pre className="min-w-0 grow overflow-hidden bg-white pt-4 pl-4 font-['Liberation_Serif',serif] text-base leading-[19px] text-black">{body}</pre>
            <div className="flex w-[17px] shrink-0 flex-col items-center bg-[#f0f0f0] px-px pt-[17px] pb-[17px]">
              <svg width="11" height="8" className="mb-[9px] shrink-0" fill="none" stroke="#555" strokeWidth="2.500" aria-hidden="true"><path d="m.5 7 5-5 5 5" /></svg>
              <div className="flex w-full grow flex-col"><div className="h-[62%] bg-[#cdcdcd]" /></div>
              <svg width="11" height="8" className="shrink-0" fill="none" stroke="#555" strokeWidth="2.500" aria-hidden="true"><path d="m.5 1 5 5 5-5" /></svg>
            </div>
          </div>
        </article>
      </main>

      {/* status bar */}
      <footer className="flex h-[26px] shrink-0 items-center justify-between border-t border-[#c3cbd8] bg-linear-to-b from-[#e0e5ec] to-[#ecf0f4] to-30% pt-0.5 pr-4 pl-[13px] text-[#6b89bb]">
        <span>6 message(s), 0 unread</span>
        <span className="flex items-center gap-0.5">Working online<SmallGlobe /></span>
      </footer>

      {/* taskbar */}
      <div className="flex h-10 shrink-0 items-stretch border-t border-black bg-linear-to-b from-[#5c5c5c] to-[#3f3f3f] to-10%">
        <button aria-label="Start" className="flex w-[57px] items-center pl-2">
          <Svg s={37} vb={36}><circle cx="18" cy="18" r="17.500" fill="url(#orb)" stroke="#1c3c52" /><ellipse cx="18" cy="10" rx="14" ry="8" fill="#fff" opacity=".25" /><path d="M10 11q4-3 8-1l-2 8q-4-2-8 1Z" fill="#f0562a" /><path d="M19 10.500q4 2 8-1l-2 8q-4 3-8 1Z" fill="#8cc63e" /><path d="M7.700 20q4-3 8-1l-2 8q-4-2-8 1Z" fill="#3fa9f5" /><path d="M16.700 19.500q4 2 8-1l-2 8q-4 3-8 1Z" fill="#fdc52f" /></Svg>
        </button>
        {tasks.map((t) => <TaskButton key={t.name} {...t} />)}
        <span className="grow" />
        <div className="flex items-center text-white">
          <button aria-label="Show hidden icons" className="flex w-6 justify-center"><svg width="7" height="4"><path d="M0 4h7L3.500 0Z" fill="#fff" /></svg></button>
          <span className="flex w-6 justify-center"><Swirl s={15} /></span>
          <span className="flex w-6 justify-center"><span className="w-3.5 bg-[#ff7a3c] text-center text-[11px] leading-[14px]">73</span></span>
          <span className="flex w-6 justify-center font-['Liberation_Sans',sans-serif] text-[10px] text-[#f0127f]">100</span>
          <span className="flex w-6 justify-center"><svg width="16" height="14" fill="none" stroke="#fff"><path d="M.5 4.500h2l3-3v11l-3-3h-2ZM7.500 5q1.500 2 0 4M10 3q3 4 0 8M12.500 1.500q4.500 5.500 0 11" /></svg></span>
          <span className="flex w-6 justify-center"><svg width="12" height="16" fill="none" stroke="#fff"><rect x="3" y="0" width="6" height="11" rx="3" fill="#fff" stroke="none" /><path d="M.5 7v2q0 4 5.500 4t5.500-4V7M6 13v2.500M2.500 15.500h7" /></svg></span>
          <span className="flex w-6 justify-center"><svg width="16" height="14" fill="none" stroke="#fff"><path d="M5.500 3.500h10v7H4.500V6M10 10.500v3M6 13.500h8M.500.500h4v4h-4ZM2.500 4.500V8h2" /></svg></span>
          <span className="flex w-6 justify-center"><svg width="17" height="16" fill="none" stroke="#fff"><path d="M.5 3.500 15.500.500v13L.500 12.500ZM5 8q0-3 5-3M10 3v3H7M11 8q0 3-5 3" /><circle cx="13" cy="12.500" r="3.500" fill="#f90" stroke="none" /></svg></span>
          <span className="flex w-8 justify-center"><svg width="23" height="14" fill="none" stroke="#fff"><rect x=".5" y=".5" width="22" height="12" rx="1" /><path d="M3 4h17M3 6.500h17" strokeDasharray="2 1" /><path d="M3 9.500h2M6.500 9.500h10M18 9.500h2" /></svg></span>
          <span className="w-9 text-center">ENG</span>
          <time className="w-[68px] text-center leading-[18px]">7:12<br />16.04.2024</time>
          <button aria-label="Notifications" className="flex w-10 justify-center"><svg width="17" height="16" fill="none" stroke="#fff"><path d="M.5.500h15.500v11h-5.500l-2.500 3-2.500-3H.500Z" /></svg></button>
          <button aria-label="Show desktop" className="ml-2 h-[39px] w-[14px] border border-[#8a8a8a] bg-linear-to-br from-[#777] to-[#222]" />
        </div>
      </div>

      {/* pointer */}
      <svg width="13" height="20" viewBox="0 0 13 20" className="absolute top-[681px] left-[572px]" aria-hidden="true"><path d="M.7 1v15l3.500-3.200 2.500 6 2.500-1-2.500-5.800h5Z" fill="#fff" stroke="#000" /></svg>
    </div>
  );
}
